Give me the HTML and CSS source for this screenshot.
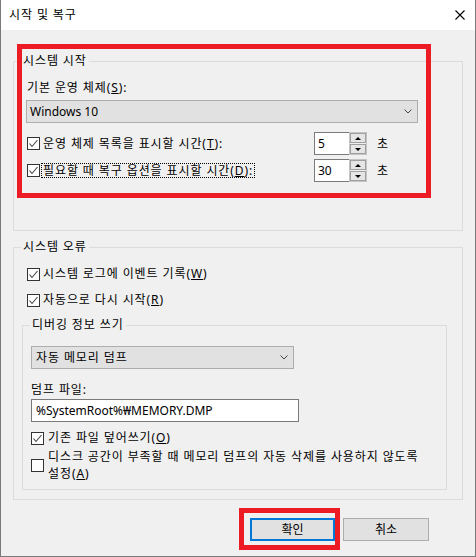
FILE: index.html
```html
<!DOCTYPE html>
<html lang="ko">
<head>
<meta charset="utf-8">
<title>시작 및 복구</title>
<link rel="stylesheet" href="styles.css">
</head>
<body>
<div class="window">
  <div class="titlebar">
    <span class="title">시작 및 복구</span>
    <svg class="close" width="10" height="10" viewBox="0 0 10 10"><path d="M0.5 0.5L9.5 9.5M9.5 0.5L0.5 9.5" stroke="#000" stroke-width="1.1" fill="none"/></svg>
  </div>
  <div class="content">
    <fieldset class="group g1">
      <legend>시스템 시작</legend>
      <div class="gbody">
        <div class="line">기본 운영 체제(<u>S</u>):</div>
        <div class="combo combo-os">
          <span class="latin">Windows 10</span>
          <svg class="chev" width="8" height="5" viewBox="0 0 8 5"><path d="M0.5 0.5L4 4L7.5 0.5" stroke="#444" fill="none"/></svg>
        </div>
        <div class="spin-row r1">
          <div class="check">
            <span class="box"><svg width="11" height="11" viewBox="0 0 11 11"><path d="M1.5 5.5L4 8.5L9.5 2" stroke="#444" stroke-width="1.1" fill="none"/></svg></span>
            <span class="text">운영 체제 목록을 표시할 시간(<u>T</u>):</span>
          </div>
          <div class="spin">
            <span class="spin-val latin">5</span>
            <span class="spin-btns"><span class="sb"><i class="up"></i></span><span class="sb"><i class="down"></i></span></span>
          </div>
          <span class="unit">초</span>
        </div>
        <div class="spin-row r2">
          <div class="check">
            <span class="box"><svg width="11" height="11" viewBox="0 0 11 11"><path d="M1.5 5.5L4 8.5L9.5 2" stroke="#444" stroke-width="1.1" fill="none"/></svg></span>
            <span class="text focus">필요할 때 복구 옵션을 표시할 시간(<u>D</u>):</span>
          </div>
          <div class="spin">
            <span class="spin-val latin">30</span>
            <span class="spin-btns"><span class="sb"><i class="up"></i></span><span class="sb"><i class="down"></i></span></span>
          </div>
          <span class="unit">초</span>
        </div>
      </div>
    </fieldset>

    <fieldset class="group g2">
      <legend>시스템 오류</legend>
      <div class="gbody">
        <div class="check crow">
          <span class="box"><svg width="11" height="11" viewBox="0 0 11 11"><path d="M1.5 5.5L4 8.5L9.5 2" stroke="#444" stroke-width="1.1" fill="none"/></svg></span>
          <span class="text">시스템 로그에 이벤트 기록(<u>W</u>)</span>
        </div>
        <div class="check crow cr2">
          <span class="box"><svg width="11" height="11" viewBox="0 0 11 11"><path d="M1.5 5.5L4 8.5L9.5 2" stroke="#444" stroke-width="1.1" fill="none"/></svg></span>
          <span class="text">자동으로 다시 시작(<u>R</u>)</span>
        </div>
        <fieldset class="group g3">
          <legend>디버깅 정보 쓰기</legend>
          <div class="gbody">
            <div class="combo combo-dump">
              <span>자동 메모리 덤프</span>
              <svg class="chev" width="8" height="5" viewBox="0 0 8 5"><path d="M0.5 0.5L4 4L7.5 0.5" stroke="#444" fill="none"/></svg>
            </div>
            <div class="line dump-label">덤프 파일:</div>
            <div class="textbox latin">%SystemRoot%₩MEMORY.DMP</div>
            <div class="check nrow overwrite">
              <span class="box"><svg width="11" height="11" viewBox="0 0 11 11"><path d="M1.5 5.5L4 8.5L9.5 2" stroke="#444" stroke-width="1.1" fill="none"/></svg></span>
              <span class="text">기존 파일 덮어쓰기(<u>O</u>)</span>
            </div>
            <div class="check nrow nodelete">
              <span class="box"></span>
              <span class="text">디스크 공간이 부족할 때 메모리 덤프의 자동 삭제를 사용하지 않도록<br>설정(<u>A</u>)</span>
            </div>
          </div>
        </fieldset>
      </div>
    </fieldset>

    <div class="buttons">
      <button class="btn default">확인</button>
      <button class="btn cancel">취소</button>
    </div>
  </div>
  <div class="mark mark-start"></div>
  <div class="mark mark-ok"></div>
</div>
</body>
</html>
```
FILE: styles.css
```css
* { box-sizing: border-box; }
html, body { margin: 0; padding: 0; }
body {
  font-family: "Noto Sans", "Noto Sans CJK KR", sans-serif;
  font-size: 12px;
  line-height: 16px;
  letter-spacing: 0.9px;
  color: #000;
  background: #fff;
}
.latin { letter-spacing: 0; }
u { text-decoration: underline; text-underline-offset: 1px; }

.window {
  position: relative;
  width: 476px;
  height: 557px;
  background: #f0f0f0;
  border: 1px solid #7a7a7a;
  border-top: none;
}
.titlebar {
  height: 30px;
  background: #fff;
  display: flex;
  align-items: center;
  padding-left: 8px;
  padding-right: 10px;
}
.close { margin-left: auto; }

.content { padding: 23px 12px 0; }

fieldset {
  margin: 0;
  padding: 0;
  border: 1px solid #dcdcdc;
  min-width: 0;
}
legend {
  margin-left: 7px;
  padding: 0 2px;
  line-height: 16px;
}
.g1 { width: 450px; }
.g1 > .gbody { padding: 11px 0 48px 13px; }
.line { height: 16px; }

.combo {
  display: flex;
  align-items: center;
  justify-content: space-between;
  height: 23px;
  border: 1px solid #adadad;
  background: #e1e1e1;
  padding: 0 5px 0 3px;
}
.combo-os { width: 392px; margin: 4px 0 0 -1px; }

.spin-row { display: flex; align-items: center; height: 23px; }
.r1 { margin-top: 9px; }
.r2 { margin-top: 4px; }
.check { display: flex; align-items: center; }
.spin-row .check { width: 287px; }
.box {
  width: 13px;
  height: 13px;
  border: 1px solid #333;
  background: #fff;
  flex: none;
  display: flex;
  align-items: center;
  justify-content: center;
}
.check .text { margin-left: 3px; }
.check .text.focus {
  margin-left: 1px;
  padding: 0 1px;
  border: 1px dotted #000;
  line-height: 13px;
}

.spin { display: flex; width: 53px; height: 23px; }
.spin-val {
  width: 35px;
  border: 1px solid #7a7a7a;
  border-right: none;
  background: #fff;
  padding-left: 3px;
  display: flex;
  align-items: center;
}
.spin-btns {
  width: 18px;
  border: 1px solid #c4c4c4;
  background: #f0f0f0;
  display: flex;
  flex-direction: column;
  gap: 1px;
  padding: 0;
}
.sb {
  height: 10px;
  border: 1px solid #a0a0a0;
  background: #e5e5e5;
  display: flex;
  align-items: center;
  justify-content: center;
}
.sb i { display: block; width: 0; height: 0; border-left: 3px solid transparent; border-right: 3px solid transparent; }
.sb .up { border-bottom: 3px solid #000; }
.sb .down { border-top: 3px solid #000; }
.unit { margin-left: 10px; }

.g2 { width: 450px; margin-top: 8px; }
.g2 > .gbody { padding: 11px 0 9px 8px; }
.crow { height: 16px; margin-left: 5px; }
.cr2 { margin-top: 10px; }

.g3 { width: 425px; margin-top: 9px; }
.g3 > .gbody { padding: 13px 0 7px 8px; }
.combo-dump { width: 263px; padding-left: 4px; }
.dump-label { margin-top: 13px; }
.textbox {
  margin-top: 1px;
  width: 268px;
  height: 23px;
  border: 1px solid #7a7a7a;
  background: #fff;
  padding-left: 4px;
  display: flex;
  align-items: center;
}
.nrow .text { margin-left: 4px; }
.overwrite { margin-top: 8px; height: 16px; }
.nodelete { margin-top: 2px; }
.nodelete .text { line-height: 17px; }

.buttons {
  display: flex;
  justify-content: flex-end;
  gap: 8px;
  margin-top: 18px;
  padding-right: 34px;
}
.btn {
  height: 23px;
  width: 86px;
  border: 1px solid #adadad;
  background: #e1e1e1;
  font: inherit;
  color: #000;
  padding: 0;
  display: flex;
  align-items: center;
  justify-content: center;
}
.btn.default { width: 85px; border: 2px solid #0078d7; }

.mark {
  position: absolute;
  border: 5px solid #ed1c24;
  pointer-events: none;
}
.mark-start { left: 16px; top: 44px; width: 414px; height: 154px; }
.mark-ok { left: 238px; top: 508px; width: 101px; height: 42px; }
```
